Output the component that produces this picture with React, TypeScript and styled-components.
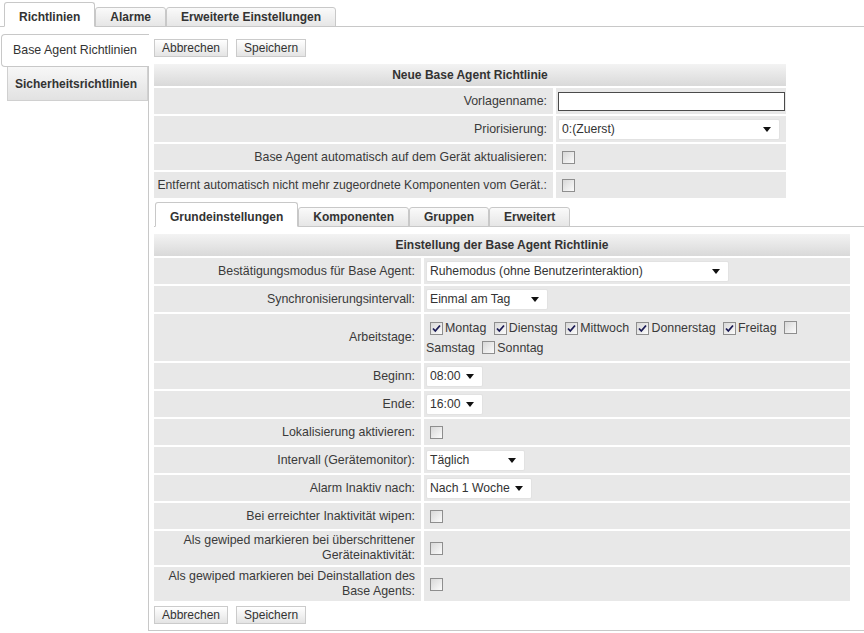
import React from 'react'
import styled, { createGlobalStyle } from 'styled-components'

const GlobalStyle = createGlobalStyle`
  body {
    margin: 0;
    background: #fff;
    font-family: "Liberation Sans", Arial, sans-serif;
    font-size: 12.4px;
    color: #333;
  }
`

const Page = styled.div`
  width: 864px;
  height: 633px;
  overflow: hidden;
`

const TabBar = styled.div<{ $inner?: boolean }>`
  display: flex;
  align-items: flex-end;
  height: ${(p) => (p.$inner ? '24px' : '26px')};
  padding-left: ${(p) => (p.$inner ? '1px' : '4px')};
  border-bottom: 1px solid #c8c8c8;
`

const Tab = styled.div<{ $active?: boolean }>`
  font-size: 12px;
  font-weight: bold;
  line-height: 18px;
  padding: ${(p) => (p.$active ? '5px 14px 0' : '0 14px')};
  margin-bottom: -1px;
  border: 1px solid #c8c8c8;
  border-bottom: ${(p) => (p.$active ? '1px solid #fff' : '1px solid #c8c8c8')};
  border-radius: 3px 3px 0 0;
  background: ${(p) => (p.$active ? '#fff' : 'linear-gradient(#fafafa, #e6e6e6)')};
  color: #333;
`

const Body = styled.div`
  display: flex;
  margin-top: 7px;
`

const Sidebar = styled.div`
  width: 147px;
  padding-left: 1px;
  flex-shrink: 0;
`

const SideItem = styled.div<{ $active?: boolean }>`
  position: relative;
  z-index: 1;
  ${(p) =>
    p.$active
      ? `
    height: 31px;
    line-height: 31px;
    background: #fff;
    border: 1px solid #c8c8c8;
    border-right: none;
    border-radius: 4px 0 0 4px;
    margin-right: -1px;
    padding-left: 11px;
  `
      : `
    height: 33px;
    line-height: 34px;
    background: linear-gradient(#f7f7f7, #e2e2e2);
    border: 1px solid #d0d0d0;
    border-top: none;
    margin-left: 6px;
    padding-left: 7px;
    font-size: 12px;
    font-weight: bold;
  `}
`

const Content = styled.div`
  flex: 1;
  height: 597px;
  box-sizing: border-box;
  border-left: 1px solid #c8c8c8;
  border-bottom: 1px solid #c8c8c8;
  padding: 5px 0 0 5px;
`

const ButtonRow = styled.div`
  display: flex;
  gap: 8px;
`

const Button = styled.button`
  height: 18px;
  padding: 0 7px;
  font-family: inherit;
  font-size: 12px;
  color: #333;
  border: 1px solid #cbcbcb;
  background: linear-gradient(#ffffff, #e4e4e4);
  cursor: pointer;
`

const Grid = styled.div<{ $label: number; $value: number }>`
  display: grid;
  grid-template-columns: ${(p) => p.$label}px ${(p) => p.$value}px;
  column-gap: 3px;
  row-gap: 2px;
  margin-top: 7px;
`

const Header = styled.div`
  grid-column: 1 / span 2;
  height: 22px;
  line-height: 22px;
  text-align: center;
  font-size: 12px;
  font-weight: bold;
  color: #333;
  background: linear-gradient(#f3f3f3, #d9d9d9);
`

const Label = styled.div<{ $h?: number; $nowrap?: boolean; $fs?: number }>`
  min-height: ${(p) => p.$h ?? 26}px;
  background: #e8e8e8;
  display: flex;
  align-items: center;
  justify-content: flex-end;
  text-align: right;
  padding: 0 6px 0 2px;
  line-height: 15px;
  color: #3a3a3a;
  font-size: ${(p) => p.$fs ?? 12.4}px;
  white-space: ${(p) => (p.$nowrap ? 'nowrap' : 'normal')};
`

const Value = styled.div`
  background: #e8e8e8;
  display: flex;
  align-items: center;
  padding-left: 2px;
`

const Days = styled.div`
  background: #e8e8e8;
  padding: 4px 14px 3px 2px;
  line-height: 20px;
  color: #3a3a3a;
`

const TextInput = styled.input`
  width: 227px;
  height: 19px;
  box-sizing: border-box;
  border: 1px solid #4a4a4a;
  background: #fff;
  outline: none;
`

const SelectBox = styled.div<{ $w: number }>`
  width: ${(p) => p.$w}px;
  height: 21px;
  box-sizing: border-box;
  background: #fff;
  border: 1px solid #e2e2e2;
  border-radius: 2px;
  display: flex;
  align-items: center;
  justify-content: space-between;
  gap: 4px;
  padding: 0 8px 0 3px;
  color: #333;
  font-size: 12.2px;
  white-space: nowrap;
`

const Arrow = styled.span`
  flex-shrink: 0;
  width: 0;
  height: 0;
  border-left: 4px solid transparent;
  border-right: 4px solid transparent;
  border-top: 5px solid #111;
`

const Box = styled.span`
  display: inline-flex;
  align-items: center;
  justify-content: center;
  width: 13px;
  height: 13px;
  box-sizing: border-box;
  border: 1px solid #8e8e8e;
  background: linear-gradient(135deg, #d8d8d8, #fbfbfb);
  vertical-align: -2px;
  margin: 0 2px 0 4px;
`

const Footer = styled.div`
  margin-top: 5px;
`

function Check({ on }: { on?: boolean }) {
  return (
    <Box>
      {on && (
        <svg width="11" height="11" viewBox="0 0 11 11">
          <path d="M2 5.5 L4.3 8 L9 2.5" fill="none" stroke="#1b1b55" strokeWidth="1.8" />
        </svg>
      )}
    </Box>
  )
}

function Select({ w, text }: { w: number; text: string }) {
  return (
    <SelectBox $w={w}>
      <span>{text}</span>
      <Arrow />
    </SelectBox>
  )
}

function Buttons() {
  return (
    <ButtonRow>
      <Button>Abbrechen</Button>
      <Button>Speichern</Button>
    </ButtonRow>
  )
}

export default function App() {
  return (
    <Page>
      <GlobalStyle />
      <TabBar>
        <Tab $active>Richtlinien</Tab>
        <Tab>Alarme</Tab>
        <Tab>Erweiterte Einstellungen</Tab>
      </TabBar>
      <Body>
        <Sidebar>
          <SideItem $active>Base Agent Richtlinien</SideItem>
          <SideItem>Sicherheitsrichtlinien</SideItem>
        </Sidebar>
        <Content>
          <Buttons />
          <Grid $label={399} $value={230}>
            <Header>Neue Base Agent Richtlinie</Header>
            <Label $nowrap>Vorlagenname:</Label>
            <Value>
              <TextInput />
            </Value>
            <Label $nowrap>Priorisierung:</Label>
            <Value>
              <Select w={222} text="0:(Zuerst)" />
            </Value>
            <Label $nowrap>Base Agent automatisch auf dem Gerät aktualisieren:</Label>
            <Value>
              <Check />
            </Value>
            <Label $nowrap $fs={12.2}>
              Entfernt automatisch nicht mehr zugeordnete Komponenten vom Gerät.:
            </Label>
            <Value>
              <Check />
            </Value>
          </Grid>

          <div style={{ marginTop: 4 }}>
            <TabBar $inner>
              <Tab $active>Grundeinstellungen</Tab>
              <Tab>Komponenten</Tab>
              <Tab>Gruppen</Tab>
              <Tab>Erweitert</Tab>
            </TabBar>
          </div>

          <Grid $label={267} $value={426}>
            <Header>Einstellung der Base Agent Richtlinie</Header>
            <Label>Bestätigungsmodus für Base Agent:</Label>
            <Value>
              <Select w={303} text="Ruhemodus (ohne Benutzerinteraktion)" />
            </Value>
            <Label>Synchronisierungsintervall:</Label>
            <Value>
              <Select w={122} text="Einmal am Tag" />
            </Value>
            <Label $h={47}>Arbeitstage:</Label>
            <Days>
              <Check on />Montag <Check on />Dienstag <Check on />Mittwoch <Check on />Donnerstag{' '}
              <Check on />Freitag <Check />Samstag <Check />Sonntag
            </Days>
            <Label>Beginn:</Label>
            <Value>
              <Select w={57} text="08:00" />
            </Value>
            <Label>Ende:</Label>
            <Value>
              <Select w={57} text="16:00" />
            </Value>
            <Label>Lokalisierung aktivieren:</Label>
            <Value>
              <Check />
            </Value>
            <Label>Intervall (Gerätemonitor):</Label>
            <Value>
              <Select w={99} text="Täglich" />
            </Value>
            <Label>Alarm Inaktiv nach:</Label>
            <Value>
              <Select w={106} text="Nach 1 Woche" />
            </Value>
            <Label>Bei erreichter Inaktivität wipen:</Label>
            <Value>
              <Check />
            </Value>
            <Label $h={34}>Als gewiped markieren bei überschrittener Geräteinaktivität:</Label>
            <Value>
              <Check />
            </Value>
            <Label $h={34}>Als gewiped markieren bei Deinstallation des Base Agents:</Label>
            <Value>
              <Check />
            </Value>
          </Grid>
          <Footer>
            <Buttons />
          </Footer>
        </Content>
      </Body>
    </Page>
  )
}
